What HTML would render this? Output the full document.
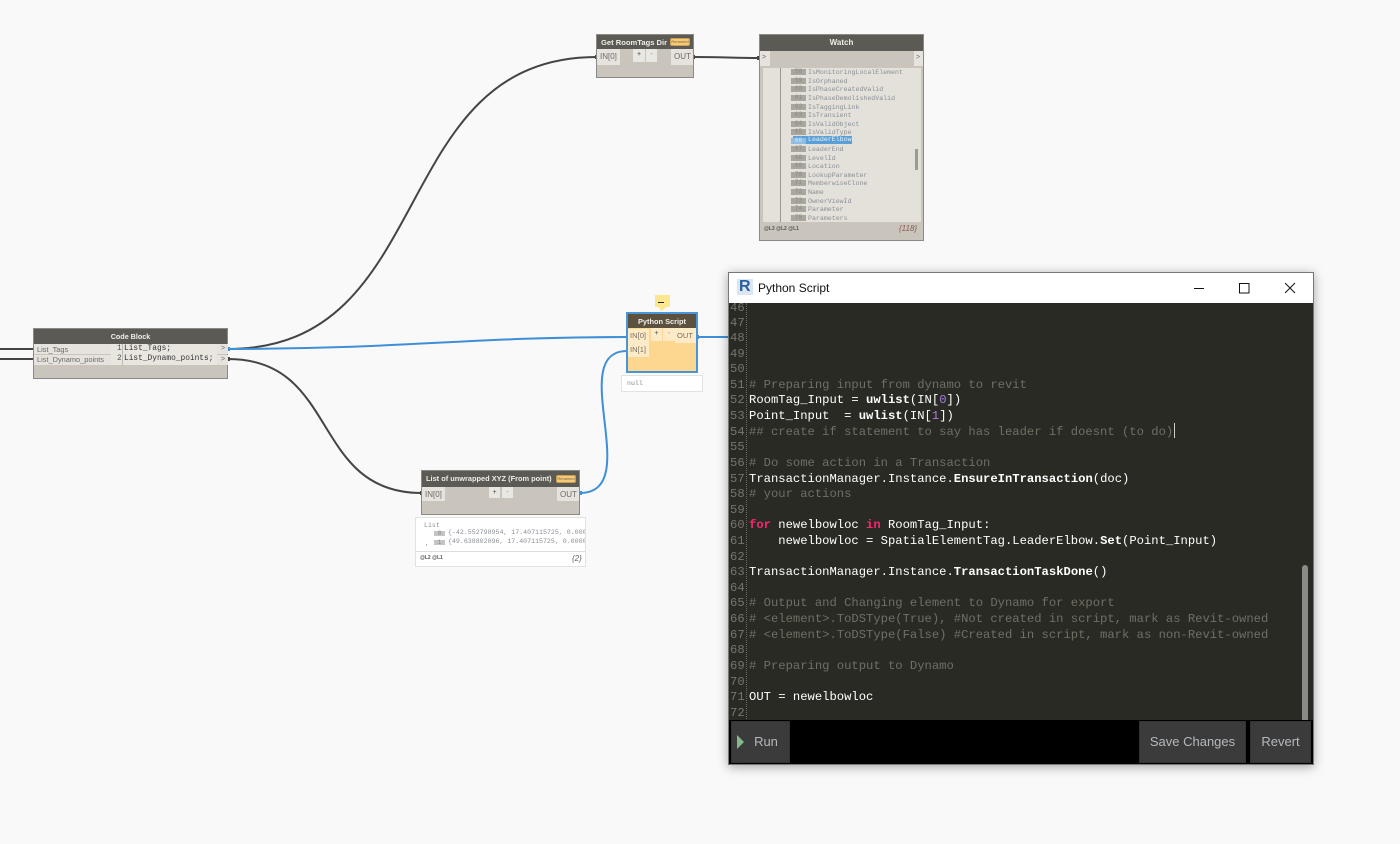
<!DOCTYPE html>
<html><head><meta charset="utf-8"><style>
html,body{margin:0;padding:0;width:1400px;height:844px;overflow:hidden;background:#f9f9f9;font-family:"Liberation Sans",sans-serif}
.a{position:absolute;white-space:pre}
.node{position:absolute;background:#c9c5bd;border:1px solid #8b8983;box-sizing:border-box}
.hd{position:absolute;left:0;top:0;right:0;background:#5c5a55;color:#f0eee8;font-size:8px;font-weight:bold;text-align:center}
.p{position:absolute;background:#e6e3de;color:#6b6a66;font-size:7.5px;line-height:14px;padding-left:3px;box-sizing:border-box}
.b{position:absolute;background:#e9e7e2;color:#444;font-size:7px;text-align:center;line-height:12px}
.ren{position:absolute;background:#f6ca76;border:1px solid #c9a050;border-radius:2px;font-size:4px;line-height:6px;color:#765;text-align:center;height:6px;overflow:hidden;box-sizing:content-box}
.w{position:absolute;font:6.6px/8.4px "Liberation Mono",monospace;color:#8a8f96;white-space:pre}
.n{position:absolute;left:32px;width:15px;height:6px;margin-top:-2px;background:#a9a69f;color:#8b8983;font:6px/6px "Liberation Mono",monospace;text-align:center}
#code div{position:absolute;left:20px;font:12.2px/15.6px "Liberation Mono",monospace;color:#fff;white-space:pre}
#code .g{color:#6f6f64}
#code .ln{left:1px;color:#75756b;width:16px;text-align:left;font-size:12.2px}
b{font-weight:bold}
.btn{position:absolute;top:721px;height:42px;background:#3b3b3b;border:1px solid #333;color:#b5b9bd;font-size:13px;line-height:40px;text-align:center;box-sizing:border-box}
</style></head><body>
<svg class="a" style="left:0;top:0" width="1400" height="844" fill="none">
<path d="M228 349C440 349 385 57 597 57" stroke="#444" stroke-width="2"/>
<path d="M228 359C340 359 310 493 422 493" stroke="#444" stroke-width="2"/>
<path d="M0 349H34M0 359H34" stroke="#444" stroke-width="2"/>
<path d="M693 57C720 57 735 58 759 58" stroke="#444" stroke-width="2"/>
<path d="M228 349C400 349 470 337 627 337" stroke="#3e8fd8" stroke-width="2"/>
<path d="M580 493C645 493 565 351 627 351" stroke="#3e8fd8" stroke-width="2"/>
<path d="M697 337H730" stroke="#3e8fd8" stroke-width="2"/>
<rect x="228" y="347" width="2" height="4" fill="#3e8fd8"/>
<rect x="228" y="357" width="2" height="4" fill="#444"/>
<rect x="595" y="55" width="2" height="4" fill="#444"/>
<rect x="693" y="55" width="2" height="4" fill="#444"/>
<rect x="757" y="56" width="2" height="4" fill="#444"/>
<rect x="420" y="491" width="2" height="4" fill="#444"/>
<rect x="580" y="491" width="2" height="4" fill="#3e8fd8"/>
<rect x="697" y="335" width="2" height="4" fill="#3e8fd8"/>
</svg>

<!-- Get RoomTags -->
<div class="node" style="left:596px;top:34px;width:98px;height:44px">
<div class="hd" style="height:14px;line-height:15px;text-align:left;padding-left:4px;font-size:7.6px">Get RoomTags Dir</div>
<div class="ren" style="left:73px;top:3px;width:18px">Renamed</div>
<div class="p" style="left:0;top:14px;width:23px;height:16px;line-height:16px;font-size:8px">IN[0]</div>
<div class="b" style="left:36px;top:14px;width:12px;height:13px">+</div>
<div class="b" style="left:49px;top:14px;width:11px;height:13px;color:#888">-</div>
<div class="p" style="left:74px;top:14px;width:22px;height:16px;line-height:16px;font-size:8px">OUT</div>
</div>

<!-- Watch -->
<div class="node" style="left:759px;top:34px;width:165px;height:207px">
<div class="hd" style="height:16px;line-height:16px">Watch</div>
<div class="p" style="left:0;top:16px;width:10px;height:15px;padding:0 0 0 2px;font-size:7px">&gt;</div>
<div class="p" style="left:154px;top:16px;width:9px;height:15px;padding:0 0 0 2px;font-size:7px">&gt;</div>
<div style="position:absolute;left:3px;top:33px;width:158px;height:154px;background:#e3e1da">
<div style="position:absolute;left:17px;top:0;width:1px;height:154px;background:#99978f"></div>
<div style="position:absolute;left:152px;top:81px;width:3px;height:21px;background:#9b9a95"></div>
<div style="position:absolute;left:30px;top:68px;width:59px;height:8px;background:#5a9fd6"></div>
<div class="n" style="left:28px;top:3px">58</div><div class="w" style="left:45px;top:1px">IsMonitoringLocalElement</div>
<div class="n" style="left:28px;top:12px">59</div><div class="w" style="left:45px;top:10px">IsOrphaned</div>
<div class="n" style="left:28px;top:20px">60</div><div class="w" style="left:45px;top:18px">IsPhaseCreatedValid</div>
<div class="n" style="left:28px;top:29px">61</div><div class="w" style="left:45px;top:27px">IsPhaseDemolishedValid</div>
<div class="n" style="left:28px;top:38px">62</div><div class="w" style="left:45px;top:36px">IsTaggingLink</div>
<div class="n" style="left:28px;top:46px">63</div><div class="w" style="left:45px;top:44px">IsTransient</div>
<div class="n" style="left:28px;top:55px">64</div><div class="w" style="left:45px;top:53px">IsValidObject</div>
<div class="n" style="left:28px;top:63px">65</div><div class="w" style="left:45px;top:61px">IsValidType</div>
<div class="n" style="left:28px;top:72px;background:#8fbde2;color:#d5e5f2">66</div><div class="w" style="left:45px;top:68px;color:#e8f1f8">LeaderElbow</div>
<div class="n" style="left:28px;top:80px">67</div><div class="w" style="left:45px;top:78px">LeaderEnd</div>
<div class="n" style="left:28px;top:89px">68</div><div class="w" style="left:45px;top:87px">LevelId</div>
<div class="n" style="left:28px;top:97px">69</div><div class="w" style="left:45px;top:95px">Location</div>
<div class="n" style="left:28px;top:106px">70</div><div class="w" style="left:45px;top:104px">LookupParameter</div>
<div class="n" style="left:28px;top:114px">71</div><div class="w" style="left:45px;top:112px">MemberwiseClone</div>
<div class="n" style="left:28px;top:123px">72</div><div class="w" style="left:45px;top:121px">Name</div>
<div class="n" style="left:28px;top:132px">73</div><div class="w" style="left:45px;top:130px">OwnerViewId</div>
<div class="n" style="left:28px;top:140px">74</div><div class="w" style="left:45px;top:138px">Parameter</div>
<div class="n" style="left:28px;top:149px">75</div><div class="w" style="left:45px;top:147px">Parameters</div>
</div>
<div class="a" style="left:4px;top:191px;font-size:5px;color:#555;font-weight:bold">@L3 @L2 @L1</div>
<div class="a" style="left:139px;top:189px;font-size:8px;font-style:italic;color:#8c5a50">{118}</div>
</div>

<!-- Code Block -->
<div class="node" style="left:33px;top:328px;width:195px;height:51px">
<div class="hd" style="height:15px;line-height:16px;font-size:7.2px">Code Block</div>
<div class="p" style="left:0;top:15px;width:77px;height:10px;line-height:11px;font-size:7.4px">List_Tags</div>
<div class="p" style="left:0;top:26px;width:77px;height:10px;line-height:10px;font-size:7.4px">List_Dynamo_points</div>
<div style="position:absolute;left:77px;top:15px;width:106px;height:21px;background:#e9e6e0"></div>
<div class="a" style="left:83px;top:15px;font:7.85px/10px 'Liberation Mono',monospace;color:#555">1</div>
<div class="a" style="left:83px;top:25px;font:7.85px/10px 'Liberation Mono',monospace;color:#555">2</div>
<div class="a" style="left:90px;top:15px;font:7.85px/10px 'Liberation Mono',monospace;color:#333">List_Tags;</div>
<div class="a" style="left:90px;top:25px;font:7.85px/10px 'Liberation Mono',monospace;color:#333">List_Dynamo_points;</div>
<div style="position:absolute;left:88px;top:15px;width:1px;height:21px;background:#bbb"></div>
<div class="p" style="left:183px;top:15px;width:11px;height:10px;line-height:10px;font-size:7px;padding-left:4px">&gt;</div>
<div class="p" style="left:183px;top:26px;width:11px;height:10px;line-height:10px;font-size:7px;padding-left:4px">&gt;</div>
</div>

<!-- List of unwrapped -->
<div class="node" style="left:421px;top:470px;width:159px;height:45px">
<div class="hd" style="height:16px;line-height:16px;text-align:left;padding-left:4px;font-size:7.4px;white-space:pre">List of unwrapped XYZ (From point)</div>
<div class="ren" style="left:134px;top:4px;width:18px">Renamed</div>
<div class="p" style="left:0;top:16px;width:23px;height:14px;font-size:8px;line-height:15px">IN[0]</div>
<div class="b" style="left:67px;top:16px;width:11px;height:11px">+</div>
<div class="b" style="left:80px;top:16px;width:11px;height:11px;color:#888">-</div>
<div class="p" style="left:135px;top:16px;width:22px;height:14px;font-size:8px;line-height:15px">OUT</div>
</div>
<div style="position:absolute;left:415px;top:517px;width:171px;height:50px;background:#fff;border:1px solid #e2e2e0;box-sizing:border-box;overflow:hidden">
<div class="w" style="left:8px;top:4px">List</div>
<div class="n" style="left:18px;top:15px;width:11px;height:5px;background:#c5c5c5">0</div><div class="w" style="left:32px;top:11px">{-42.552798954, 17.407115725, 0.000000}</div>
<div class="n" style="left:18px;top:24px;width:11px;height:5px;background:#c5c5c5">1</div><div class="w" style="left:32px;top:20px">{49.638802096, 17.407115725, 0.000000}</div>
<div class="w" style="left:9px;top:22px">,</div>
<div style="position:absolute;left:0;top:33px;width:171px;height:1px;background:#ddd"></div>
<div class="a" style="left:4px;top:37px;font-size:5px;color:#555;font-weight:bold">@L2 @L1</div>
<div class="a" style="left:156px;top:36px;font-size:8px;font-style:italic;color:#666">{2}</div>
</div>

<!-- Python node -->
<div style="position:absolute;left:655px;top:295px;width:15px;height:12px;background:#fbe78d"></div>
<div style="position:absolute;left:658px;top:307px;border-left:4px solid transparent;border-right:4px solid transparent;border-top:4px solid #fbe78d"></div>
<div style="position:absolute;left:658px;top:302px;width:6px;height:1px;background:#222"></div>
<div style="position:absolute;left:626px;top:312px;width:72px;height:61px;background:#fdd78f;border:2px solid #4a95d8;box-sizing:border-box">
<div class="hd" style="height:14px;line-height:15px;background:#5c503e;font-size:7.4px">Python Script</div>
<div class="p" style="left:0;top:15px;width:21px;height:14px;background:#fdeac7;color:#7a6f5f;font-size:7.6px;padding-left:2px">IN[0]</div>
<div class="p" style="left:0;top:29px;width:21px;height:14px;background:#fdeac7;color:#7a6f5f;font-size:7.6px;padding-left:2px">IN[1]</div>
<div class="b" style="left:23px;top:14px;width:11px;height:13px;background:#fdeac7">+</div>
<div class="b" style="left:35px;top:14px;width:12px;height:13px;background:#fdeac7;color:#888">-</div>
<div class="p" style="left:47px;top:14px;width:21px;height:15px;line-height:16px;background:#fdeac7;color:#7a6f5f;font-size:7.6px;padding-left:2px">OUT</div>
</div>
<div style="position:absolute;left:621px;top:375px;width:82px;height:17px;background:#fff;border:1px solid #e2e2e0;box-sizing:border-box;font:6.6px/15px 'Liberation Mono',monospace;color:#888;padding-left:5px">null</div>

<!-- Script window -->
<div style="position:absolute;left:728px;top:272px;width:586px;height:493px;background:#2a2a24;border:1px solid #777;box-sizing:border-box;box-shadow:0 2px 10px rgba(0,0,0,.35)">
<div style="position:absolute;left:0;top:0;width:584px;height:30px;background:#fff">
<div style="position:absolute;left:8px;top:6px;width:16px;height:16px;background:#dbe6f3"></div>
<div class="a" style="left:10px;top:5px;font-size:16px;line-height:18px;font-weight:bold;color:#2b5f9e">R</div>
<div class="a" style="left:29px;top:6px;font-size:12px;line-height:18px;color:#111">Python Script</div>
<svg class="a" style="left:461px;top:6px" width="110" height="18" fill="none" stroke="#111"><path d="M4 9.5H14"/><rect x="49.5" y="4.5" width="9.5" height="9.5"/><path d="M95 4L105 14M105 4L95 14"/></svg>
</div>
<div id="code" style="position:absolute;left:0;top:30px;width:584px;height:418px;overflow:hidden;background:#2a2a24">
<div style="left:17px;top:0;width:0;height:418px;border-left:1px dotted #6b6b60;padding:0"></div>
<div class="ln" style="top:-2px">46</div><div class="ln" style="top:13px">47</div><div class="ln" style="top:28px">48</div><div class="ln" style="top:44px">49</div><div class="ln" style="top:59px">50</div>
<div class="ln" style="top:75px">51</div><div class="g" style="top:75px"># Preparing input from dynamo to revit</div>
<div class="ln" style="top:90px">52</div><div style="top:90px">RoomTag_Input = <b>uwlist</b>(IN[<span style="color:#a97fe0">0</span>])</div>
<div class="ln" style="top:106px">53</div><div style="top:106px">Point_Input  = <b>uwlist</b>(IN[<span style="color:#a97fe0">1</span>])</div>
<div class="ln" style="top:122px">54</div><div class="g" style="top:122px">## create if statement to say has leader if doesnt (to do)</div>
<div style="left:445px;top:120px;width:1px;height:15px;background:#ccc;padding:0"></div>
<div class="ln" style="top:137px">55</div>
<div class="ln" style="top:153px">56</div><div class="g" style="top:153px"># Do some action in a Transaction</div>
<div class="ln" style="top:169px">57</div><div style="top:169px">TransactionManager.Instance.<b>EnsureInTransaction</b>(doc)</div>
<div class="ln" style="top:184px">58</div><div class="g" style="top:184px"># your actions</div>
<div class="ln" style="top:200px">59</div>
<div class="ln" style="top:215px">60</div><div style="top:215px"><b style="color:#f92672">for</b> newelbowloc <b style="color:#f92672">in</b> RoomTag_Input:</div>
<div class="ln" style="top:231px">61</div><div style="top:231px">    newelbowloc = SpatialElementTag.LeaderElbow.<b>Set</b>(Point_Input)</div>
<div class="ln" style="top:247px">62</div>
<div class="ln" style="top:262px">63</div><div style="top:262px">TransactionManager.Instance.<b>TransactionTaskDone</b>()</div>
<div class="ln" style="top:278px">64</div>
<div class="ln" style="top:293px">65</div><div class="g" style="top:293px"># Output and Changing element to Dynamo for export</div>
<div class="ln" style="top:309px">66</div><div class="g" style="top:309px"># &lt;element&gt;.ToDSType(True), #Not created in script, mark as Revit-owned</div>
<div class="ln" style="top:325px">67</div><div class="g" style="top:325px"># &lt;element&gt;.ToDSType(False) #Created in script, mark as non-Revit-owned</div>
<div class="ln" style="top:340px">68</div>
<div class="ln" style="top:356px">69</div><div class="g" style="top:356px"># Preparing output to Dynamo</div>
<div class="ln" style="top:372px">70</div>
<div class="ln" style="top:387px">71</div><div style="top:387px">OUT = newelbowloc</div>
<div class="ln" style="top:403px">72</div>
<div style="left:573px;top:262px;width:6px;height:156px;background:#8a8a86;border-radius:3px 3px 0 0;padding:0"></div>
</div>
<div style="position:absolute;left:0;top:447px;width:584px;height:44px;background:#000"></div>
</div>
<div class="btn" style="left:731px;width:59px;padding-left:11px;">Run</div>
<div style="position:absolute;left:737px;top:735px;border-left:7px solid #86b98a;border-top:7px solid transparent;border-bottom:7px solid transparent"></div>
<div class="btn" style="left:1139px;width:107px">Save Changes</div>
<div class="btn" style="left:1250px;width:61px">Revert</div>
</body></html>
